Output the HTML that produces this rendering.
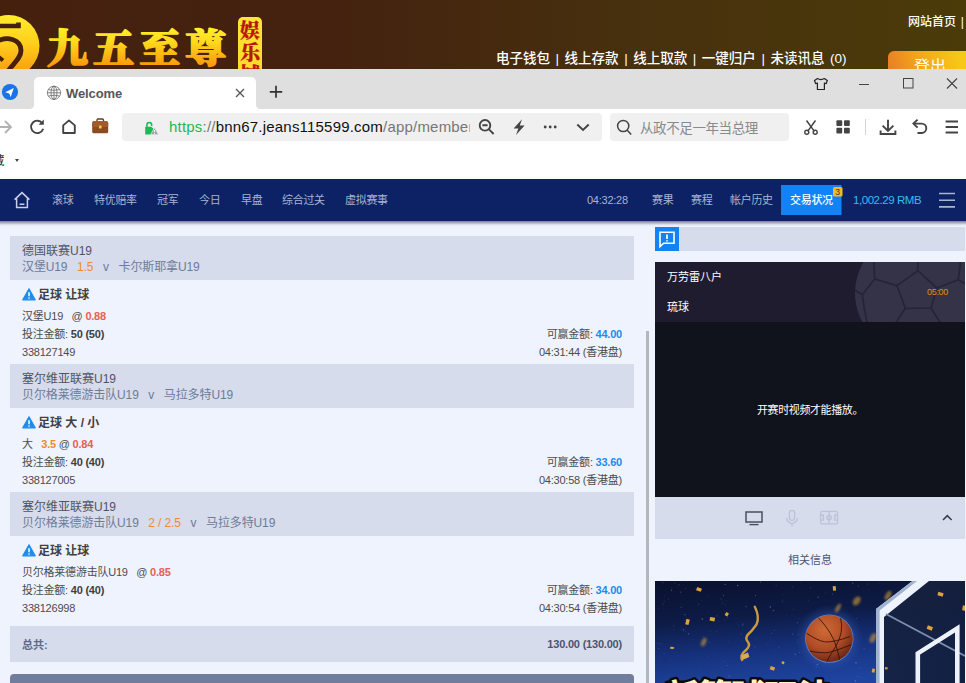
<!DOCTYPE html>
<html lang="zh-CN">
<head>
<meta charset="utf-8">
<title>Welcome</title>
<style>
*{box-sizing:border-box;margin:0;padding:0}
html,body{width:966px;height:683px;overflow:hidden;background:#eff3fe}
body{position:relative;font-family:"Liberation Sans","Noto Sans CJK SC",sans-serif;font-size:12px;color:#444}
.abs{position:absolute}
/* ---------- top site banner ---------- */
#banner{position:absolute;left:0;top:0;width:966px;height:69px;background:linear-gradient(90deg,#45200f 0%,#44220f 35%,#47300e 65%,#4b3b09 100%);overflow:hidden}
#logoc{position:absolute;left:-48px;top:23px;width:88px;height:88px;border-radius:50%;background:linear-gradient(180deg,#ffe93a 0%,#ffc21a 40%,#f39a0c 100%)}
#logot{position:absolute;left:46px;top:13px;font-family:"Liberation Serif","Noto Serif CJK SC",serif;font-weight:900;font-size:44px;line-height:60px;letter-spacing:2px;white-space:nowrap;background:linear-gradient(180deg,#fff02a 20%,#ffd21c 50%,#f59a0e 85%);-webkit-background-clip:text;background-clip:text;color:transparent}
#logob{position:absolute;left:238px;top:17px;width:24px;height:70px;border-radius:5px;background:linear-gradient(180deg,#ffe93a,#f5b21a);color:#b5140e;font-family:"Liberation Serif","Noto Serif CJK SC",serif;font-weight:900;font-size:20px;line-height:21px;text-align:center;padding-top:2px}
.blinks{position:absolute;color:#fff;font-weight:500;font-size:13px;line-height:16px;white-space:nowrap}
#logout{position:absolute;left:888px;top:51px;width:90px;height:30px;border-radius:6px 0 0 0;background:linear-gradient(75deg,#e87a26 0%,#f3a31c 35%,#f8c818 80%);color:#fff;font-size:16px;line-height:32px;text-align:left;padding-left:26px}
/* ---------- browser chrome ---------- */
#tabbar{position:absolute;left:0;top:69px;width:966px;height:40px;background:#dfdfdf}
#tab{position:absolute;left:34px;top:8px;width:222px;height:32px;background:#fff;border-radius:5px 5px 0 0}
#toolbar{position:absolute;left:0;top:109px;width:966px;height:37px;background:#fff}
#urlbox{position:absolute;left:122px;top:4px;width:479.5px;height:28px;border-radius:4px;background:#f0f0f0}
#searchbox{position:absolute;left:610px;top:4px;width:179px;height:28px;border-radius:4px;background:#f0f0f0}
#bmbar{position:absolute;left:0;top:146px;width:966px;height:33px;background:#fff}
/* ---------- nav ---------- */
#nav{position:absolute;left:0;top:179px;width:966px;height:42px;background:#0c2264}
#nav span{position:absolute;top:0;line-height:42px;font-size:11px;color:#a9b3d2;white-space:nowrap;letter-spacing:-.3px}
/* ---------- left list ---------- */
.hd{position:absolute;left:10px;width:624px;height:44px;background:#d6dcec}
.hd .l1{position:absolute;left:12px;top:8px;font-size:12px;line-height:14px;color:#505460;white-space:nowrap}
.hd .l2{position:absolute;left:12px;top:24px;font-size:12px;letter-spacing:-.12px;line-height:14px;color:#6d7b98;white-space:nowrap}
.hd .l2 b{font-weight:normal;color:#f08a32}
.bet{position:absolute;left:10px;width:624px;height:84px}
.bet div{position:absolute;white-space:nowrap;line-height:14px;font-size:11px;color:#4c4c4c;letter-spacing:-.22px}
.bet .t{left:28px;top:8px;font-size:12px;font-weight:bold;color:#404040;letter-spacing:0}
.bet .a{left:12px;top:29px}
.bet .b{left:12px;top:47px}
.bet .c{left:12px;top:65px}
.bet .d{right:12px;top:47px}
.bet .e{right:12px;top:65px}
.bet b{color:#404040}
.bet .r{color:#e8604e;font-weight:bold}
.bet .o{color:#ef8b1f;font-weight:bold}
.bet .bl{color:#1d8cf0;font-weight:bold}
.bet svg{position:absolute;left:12px;top:8px}
</style>
</head>
<body>
<!-- site banner -->
<div id="banner">
  <svg class="abs" style="left:0;top:0" width="280" height="69" viewBox="0 0 280 69">
    <defs>
      <linearGradient id="gy" x1="0" y1="0" x2="0" y2="1"><stop offset="0" stop-color="#ffee2c"/><stop offset=".45" stop-color="#ffcf1c"/><stop offset="1" stop-color="#f7960c"/></linearGradient>
      <linearGradient id="gt" gradientUnits="userSpaceOnUse" x1="0" y1="-35" x2="0" y2="4"><stop offset="0" stop-color="#fff22a"/><stop offset=".4" stop-color="#ffd81c"/><stop offset="1" stop-color="#f9980c"/></linearGradient>
      <linearGradient id="gb" x1="0" y1="0" x2="0" y2="1"><stop offset="0" stop-color="#ffe636"/><stop offset=".75" stop-color="#ffd92a"/><stop offset="1" stop-color="#f8c61e"/></linearGradient>
    </defs>
    <circle cx="8.5" cy="46" r="31" fill="url(#gy)"/>
    <path d="M-3,26 H18.5 V22.5" fill="none" stroke="#45200f" stroke-width="4.6"/>
    <path d="M-3,41.5 C6,36 21,38.5 21,50.5 C21,58 14,63 8,71" fill="none" stroke="#45200f" stroke-width="4.8"/>
    <path d="M-3,55.5 L3,60.5" fill="none" stroke="#45200f" stroke-width="4"/>
    <text transform="translate(47 61.9) scale(1.05 1)" x="0" y="0" font-family="'Liberation Serif','Noto Serif CJK SC',serif" font-weight="900" font-size="39" letter-spacing="4.9" fill="url(#gt)" stroke="url(#gt)" stroke-width="1.7" stroke-linejoin="round">九五至尊</text>
    <rect x="238" y="17" width="24" height="70" rx="5" fill="url(#gb)"/>
    <text font-family="'Liberation Serif','Noto Serif CJK SC',serif" font-weight="900" font-size="20" fill="#b8160e" stroke="#b8160e" stroke-width=".25" text-anchor="middle"><tspan x="250" y="37.6">娱</tspan><tspan x="250" y="59.6">乐</tspan><tspan x="250" y="81.6">城</tspan></text>
  </svg>
  <div class="blinks" style="left:908px;top:14px;font-size:12px;word-spacing:1.5px">网站首页 |</div>
  <div class="blinks" style="left:496px;top:51px;font-size:13.5px;word-spacing:1.8px">电子钱包 | 线上存款 | 线上取款 | 一键归户 | 未读讯息 (0)</div>
  <div id="logout">登出</div>
</div>
<!-- browser chrome -->
<div id="tabbar">
  <div class="abs" style="left:30px;top:36px;width:4px;height:4px;background:radial-gradient(circle at 0 0,#dfdfdf 3.6px,#fff 4.2px)"></div><div class="abs" style="left:256px;top:36px;width:4px;height:4px;background:radial-gradient(circle at 100% 0,#dfdfdf 3.6px,#fff 4.2px)"></div>
  <div id="tab"></div>
  <svg class="abs" style="left:0;top:0" width="966" height="39" viewBox="0 0 966 39">
    <!-- telegram-like icon -->
    <circle cx="10" cy="23" r="8.1" fill="#1a73e8"/>
    <path d="M5.2,23.3 L13.8,19.1 L10.7,28 L9.3,24.4 Z" fill="#fff"/>
    <!-- globe -->
    <g fill="none" stroke="#666" stroke-width=".8">
      <circle cx="54" cy="23.8" r="6.6"/>
      <ellipse cx="54" cy="23.8" rx="3" ry="6.6"/>
      <path d="M47.4,23.8 H60.6 M54,17.2 V30.4 M48.4,20.6 Q54,22.2 59.6,20.6 M48.4,27 Q54,25.4 59.6,27"/>
    </g>
    <!-- tab close -->
    <path d="M236,20 L244,28 M244,20 L236,28" stroke="#555" stroke-width="1.3" fill="none"/>
    <!-- plus -->
    <path d="M269.8,22.8 H282.2 M276,16.8 V28.8" stroke="#333" stroke-width="1.7" fill="none"/>
    <!-- shirt -->
    <path d="M817.5,9.5 L814.5,11.5 L815.6,14.6 L817.4,14 L817.4,20.5 L824.4,20.5 L824.4,14 L826.2,14.6 L827.3,11.5 L824.3,9.5 Q820.9,11.6 817.5,9.5 Z" fill="none" stroke="#222" stroke-width="1.2" stroke-linejoin="round"/>
    <!-- window controls -->
    <path d="M859,15.5 H869" stroke="#444" stroke-width="1"/>
    <rect x="903.5" y="9.5" width="9.5" height="9.5" fill="none" stroke="#444" stroke-width="1"/>
    <path d="M947,9.5 L957,19.5 M957,9.5 L947,19.5" stroke="#444" stroke-width="1.1"/>
  </svg>
  <div class="abs" style="left:66px;top:17px;font-size:13px;line-height:16px;font-weight:bold;color:#54565c;letter-spacing:-.1px">Welcome</div>
</div>
<div id="toolbar">
  <div id="urlbox"></div>
  <div id="searchbox"></div>
  <svg class="abs" style="left:0;top:-1px" width="966" height="38" viewBox="0 0 966 38">
    <!-- forward -->
    <path d="M-2,19 H10.8 M5,13 L11,19 L5,25" fill="none" stroke="#b2b2b2" stroke-width="1.8"/>
    <!-- reload -->
    <path d="M42.3,15.2 A6.2,6.2 0 1 0 43.2,20.8" fill="none" stroke="#444" stroke-width="1.9"/>
    <path d="M43.8,11.6 V16.8 H38.6 Z" fill="#444"/>
    <!-- home -->
    <path d="M63.2,17.4 L69,12.4 L74.8,17.4 V25 H63.2 Z" fill="none" stroke="#444" stroke-width="1.9" stroke-linejoin="round"/>
    <!-- briefcase -->
    <path d="M97,13.5 V12 Q97,11 98,11 H102.5 Q103.5,11 103.5,12 V13.5" fill="none" stroke="#6b3a1a" stroke-width="1.3"/>
    <rect x="92.2" y="13.3" width="16" height="12" rx="1.6" fill="#8a4a22"/>
    <rect x="92.2" y="13.3" width="16" height="5.6" rx="1.6" fill="#a35a2a"/>
    <rect x="99" y="17.6" width="2.6" height="3" rx=".6" fill="#f4c64a"/>
    <!-- lock -->
    <path d="M146.9,19 V17 A2.4,2.4 0 0 1 151.7,17 V18" fill="none" stroke="#1db954" stroke-width="1.5"/>
    <path d="M145.2,18.8 H151.2 L153.4,20.6 V26.6 H145.2 Z" fill="#1db954"/>
    <path d="M154.6,19.6 L158.6,26.7 H150.6 Z" fill="#a0a0a0" stroke="#f0f0f0" stroke-width=".7"/>
    <path d="M154.6,22 V24.3 M154.6,25 V25.9" stroke="#fff" stroke-width="1"/>
    <!-- zoom out -->
    <circle cx="485" cy="17.3" r="5.3" fill="none" stroke="#444" stroke-width="1.9"/>
    <path d="M488.8,21.2 L493.6,26 M482.4,17.3 H487.6" stroke="#444" stroke-width="1.9" fill="none"/>
    <!-- bolt -->
    <path d="M522,11.2 L513.6,20.6 H518.4 L516,27 L524.6,17.4 H519.8 Z" fill="#444"/>
    <!-- dots -->
    <circle cx="545.2" cy="19" r="1.45" fill="#444"/><circle cx="550.2" cy="19" r="1.45" fill="#444"/><circle cx="555.2" cy="19" r="1.45" fill="#444"/>
    <!-- chevron -->
    <path d="M577.3,16.5 L583,22 L588.7,16.5" fill="none" stroke="#444" stroke-width="1.9"/>
    <!-- search -->
    <circle cx="623.2" cy="18" r="5.6" fill="none" stroke="#444" stroke-width="1.5"/>
    <path d="M627.2,22.2 L631.2,26.4" stroke="#444" stroke-width="1.5"/>
    <!-- scissors -->
    <path d="M806.5,12.5 L814.4,23.4 M815.5,12.5 L807.6,23.4" stroke="#444" stroke-width="1.5" fill="none"/>
    <circle cx="806.8" cy="24.2" r="2" fill="none" stroke="#444" stroke-width="1.4"/>
    <circle cx="815.2" cy="24.2" r="2" fill="none" stroke="#444" stroke-width="1.4"/>
    <!-- grid -->
    <rect x="836.4" y="12.2" width="5.8" height="5.8" rx="1" fill="#444"/><rect x="844" y="12.2" width="5.8" height="5.8" rx="1" fill="#444"/>
    <rect x="836.4" y="19.8" width="5.8" height="5.8" rx="1" fill="#444"/><rect x="844" y="19.8" width="5.8" height="5.8" rx="1" fill="#444"/>
    <path d="M865.5,11 V27" stroke="#d4d4d4" stroke-width="1"/>
    <!-- download -->
    <path d="M888,11.8 V22.6 M882.6,17.6 L888,23 L893.4,17.6 M880.6,22.5 V26 H895.4 V22.5" fill="none" stroke="#444" stroke-width="1.9"/>
    <!-- undo -->
    <path d="M914.5,15.6 H921.6 A4.7,4.7 0 0 1 921.6,25 H917.5" fill="none" stroke="#444" stroke-width="1.9"/>
    <path d="M917.6,11.6 L913.4,15.6 L917.6,19.6" fill="none" stroke="#444" stroke-width="1.9"/>
    <!-- menu -->
    <path d="M945.6,13.5 H958 M945.6,19 H958 M945.6,24.5 H958" stroke="#444" stroke-width="1.8"/>
  </svg>
  <div class="abs" style="left:169px;top:8px;font-size:15px;line-height:20px;white-space:nowrap;width:301px;overflow:hidden;color:#111;letter-spacing:.2px"><span style="color:#1db954">https</span><span style="color:#777">://</span>bnn67.jeans115599.com<span style="color:#777">/app/member/</span></div>
  <div class="abs" style="left:640px;top:10px;font-size:13.5px;line-height:20px;white-space:nowrap;color:#8a8a8a;letter-spacing:-.4px">从政不足一年当总理</div>
</div>
<div id="bmbar">
  <div class="abs" style="left:-8px;top:7px;font-size:12.5px;line-height:16px;color:#333">藏</div>
  <div class="abs" style="left:15.3px;top:11px;width:0;height:0;border:2.5px solid transparent;border-top:3px solid #444;margin-top:2px"></div>
</div>
<!-- nav -->
<div class="abs" style="left:-20px;top:179px;width:1006px;height:42px;background:#0c2264;box-shadow:0 2px 3px rgba(0,0,0,.5)"></div>
<div id="nav">
  <svg class="abs" style="left:0;top:0" width="966" height="42" viewBox="0 0 966 42">
    <path d="M14.6,20.6 L22,13.6 L29.4,20.6 M16.6,19.4 V28.4 H27.4 V19.4 M19.6,25.2 H24.4" fill="none" stroke="#c9d0e6" stroke-width="1.5"/>
    <rect x="781" y="6" width="60.5" height="30" fill="#1183f4"/>
    <rect x="833" y="8" width="9.5" height="9.5" rx="1.5" fill="#f6b91f"/>
    <path d="M939,14.5 H955 M939,21.2 H955 M939,27.9 H955" stroke="#a9b3d2" stroke-width="1.6"/>
  </svg>
  <span style="left:52px">滚球</span>
  <span style="left:94px">特优赔率</span>
  <span style="left:157px">冠军</span>
  <span style="left:199px">今日</span>
  <span style="left:241px">早盘</span>
  <span style="left:282px">综合过关</span>
  <span style="left:345px">虚拟赛事</span>
  <span style="left:587px;letter-spacing:-.25px">04:32:28</span>
  <span style="left:652px">赛果</span>
  <span style="left:691px">赛程</span>
  <span style="left:730px">帐户历史</span>
  <span style="left:790px;color:#fff;font-weight:500">交易状况</span>
  <span style="left:835.3px;top:7.5px;line-height:10px;font-size:8.5px;color:#333;letter-spacing:0">3</span>
  <span style="left:853px;color:#35bdf0;letter-spacing:-.45px;font-size:11.5px">1,002.29 RMB</span>
</div>
<!-- left list -->
<div id="left">
<div class="hd" style="top:236px"><div class="l1">德国联赛U19</div><div class="l2">汉堡U19&nbsp;&nbsp; <b>1.5</b>&nbsp;&nbsp; v&nbsp;&nbsp; 卡尔斯耶拿U19</div></div>
<div class="bet" style="top:280px"><svg width="14" height="13" viewBox="0 0 14 13"><path d="M7,0.8 L13.2,11.8 H0.8 Z" fill="#1d8cf0" stroke="#1d8cf0" stroke-width="1.2" stroke-linejoin="round"/><path d="M7,4.2 V8.2 M7,9.4 V10.8" stroke="#fff" stroke-width="1.5"/></svg><div class="t">足球 让球</div><div class="a">汉堡U19&nbsp;&nbsp; @ <span class="r">0.88</span></div><div class="b">投注金额: <b>50 (50)</b></div><div class="c">338127149</div><div class="d">可赢金额: <span class="bl">44.00</span></div><div class="e">04:31:44 (香港盘)</div></div>
<div class="hd" style="top:364px"><div class="l1">塞尔维亚联赛U19</div><div class="l2">贝尔格莱德游击队U19&nbsp;&nbsp; v&nbsp;&nbsp; 马拉多特U19</div></div>
<div class="bet" style="top:408px"><svg width="14" height="13" viewBox="0 0 14 13"><path d="M7,0.8 L13.2,11.8 H0.8 Z" fill="#1d8cf0" stroke="#1d8cf0" stroke-width="1.2" stroke-linejoin="round"/><path d="M7,4.2 V8.2 M7,9.4 V10.8" stroke="#fff" stroke-width="1.5"/></svg><div class="t">足球 大 / 小</div><div class="a">大&nbsp;&nbsp; <span class="o">3.5</span> @ <span class="r">0.84</span></div><div class="b">投注金额: <b>40 (40)</b></div><div class="c">338127005</div><div class="d">可赢金额: <span class="bl">33.60</span></div><div class="e">04:30:58 (香港盘)</div></div>
<div class="hd" style="top:492px"><div class="l1">塞尔维亚联赛U19</div><div class="l2">贝尔格莱德游击队U19&nbsp;&nbsp; <b>2 / 2.5</b>&nbsp;&nbsp; v&nbsp;&nbsp; 马拉多特U19</div></div>
<div class="bet" style="top:536px"><svg width="14" height="13" viewBox="0 0 14 13"><path d="M7,0.8 L13.2,11.8 H0.8 Z" fill="#1d8cf0" stroke="#1d8cf0" stroke-width="1.2" stroke-linejoin="round"/><path d="M7,4.2 V8.2 M7,9.4 V10.8" stroke="#fff" stroke-width="1.5"/></svg><div class="t">足球 让球</div><div class="a">贝尔格莱德游击队U19&nbsp;&nbsp; @ <span class="r">0.85</span></div><div class="b">投注金额: <b>40 (40)</b></div><div class="c">338126998</div><div class="d">可赢金额: <span class="bl">34.00</span></div><div class="e">04:30:54 (香港盘)</div></div>
<div class="hd" style="top:626px;height:36px"><div class="l1" style="top:12px;font-size:11px;font-weight:bold;color:#5d6b8a">总共:</div><div class="l1" style="left:auto;right:12px;top:11px;font-size:11px;font-weight:bold;color:#4b556f;letter-spacing:-.2px">130.00 (130.00)</div></div>
<div class="abs" style="left:10px;top:674px;width:624px;height:20px;border-radius:4px 4px 0 0;background:#717d9d"></div>
<div class="abs" style="left:646px;top:331px;width:3px;height:360px;background:#b4b6bd"></div>
</div>
<!-- right -->
<div id="right">
  <div class="abs" style="left:655px;top:227px;width:310px;height:24px;background:#d6dcec"></div>
  <div class="abs" style="left:655px;top:227px;width:24px;height:24px;background:#1183f4"></div>
  <svg class="abs" style="left:655px;top:227px" width="24" height="24" viewBox="0 0 24 24"><path d="M5,5.2 H19 V16.2 H8.6 L5,19.6 Z" fill="none" stroke="#fff" stroke-width="1.6" stroke-linejoin="miter"/><path d="M12,7.6 V12 M12,13.2 V14.6" stroke="#fff" stroke-width="1.7"/></svg>
  <!-- video -->
  <div class="abs" style="left:655px;top:262px;width:310px;height:235px;background:#10131c"></div>
  <div class="abs" style="left:655px;top:262px;width:310px;height:60px;background:#1e1c2e;overflow:hidden">
    <svg class="abs" style="left:0;top:0" width="310" height="60" viewBox="0 0 310 60">
      <circle cx="260" cy="31" r="60" fill="#353348"/>
      <g fill="none" stroke="#262438" stroke-width="1.7" stroke-linejoin="round">
        <path d="M242,23.6 L262.8,8.7 L281.8,26 L276,46 L250.3,46.3 Z"/>
        <path d="M242,23.6 L219.7,17 L218.6,-4 M219.7,17 L207.3,32.7 Q209,48 212.5,62 M207.3,32.7 L200,28"/>
        <path d="M262.8,8.7 L262.8,-4 M281.8,26 L303.3,17.8 L306,-4 M303.3,17.8 L312,23"/>
        <path d="M276,46 L286,62 M250.3,46.3 L240,62"/>
      </g>
    </svg>
    <div class="abs" style="left:12px;top:7px;font-size:11px;line-height:16px;color:#fff;white-space:nowrap">万劳雷八户</div>
    <div class="abs" style="left:12px;top:37px;font-size:11px;line-height:16px;color:#fff;white-space:nowrap">琉球</div>
    <div class="abs" style="left:272px;top:24px;font-size:9px;line-height:12px;color:#e8890c;white-space:nowrap;letter-spacing:-.3px">05:00</div>
  </div>
  <div class="abs" style="left:655px;top:402px;width:310px;text-align:center;font-size:11px;line-height:16px;color:#fff;letter-spacing:-.4px">开赛时视频才能播放。</div>
  <!-- controls -->
  <div class="abs" style="left:655px;top:497px;width:310px;height:42px;background:#d6dcec"></div>
  <svg class="abs" style="left:655px;top:497px" width="310" height="42" viewBox="0 0 310 42">
    <rect x="91" y="15" width="16" height="10" fill="none" stroke="#4a4f5e" stroke-width="1.5"/>
    <path d="M94.5,27.6 H103.5" stroke="#4a4f5e" stroke-width="1.4"/>
    <g fill="none" stroke="#bcc3d6" stroke-width="1.3">
      <rect x="134.4" y="13.4" width="5.2" height="10" rx="2.6"/>
      <path d="M131.6,21 A5.4,5.4 0 0 0 142.4,21 M137,26.6 V29.4"/>
      <rect x="165.6" y="14.4" width="17" height="12.4" rx="1.6"/>
      <path d="M174.1,14.4 V26.8 M165.6,18 H168.4 V23.2 H165.6 M182.6,18 H179.8 V23.2 H182.6"/>
      <circle cx="174.1" cy="20.6" r="2.2"/>
    </g>
    <path d="M288,23 L292.3,18.7 L296.6,23" fill="none" stroke="#3a3f4e" stroke-width="1.6"/>
  </svg>
  <div class="abs" style="left:655px;top:552px;width:310px;text-align:center;font-size:11px;line-height:16px;color:#4d5570">相关信息</div>
  <!-- banner -->
  <div id="promo" class="abs" style="left:655px;top:581px;width:310px;height:102px;overflow:hidden;background:#0d1c44"><svg class="abs" style="left:0;top:0" width="310" height="102" viewBox="0 0 310 102">
<defs>
<linearGradient id="pg1" x1="0.2" y1="0" x2="0.45" y2="1"><stop offset="0" stop-color="#0a1230"/><stop offset=".35" stop-color="#0d1b46"/><stop offset=".68" stop-color="#16327e"/><stop offset="1" stop-color="#1e44a0"/></linearGradient>
<radialGradient id="pg2" cx="0.5" cy="0.5" r="0.5"><stop offset="0" stop-color="#5a8cf0" stop-opacity=".8"/><stop offset=".62" stop-color="#3a66c8" stop-opacity=".45"/><stop offset="1" stop-color="#2a50a8" stop-opacity="0"/></radialGradient>
<radialGradient id="pg3" cx="0.4" cy="0.32" r="0.75"><stop offset="0" stop-color="#cf6a36"/><stop offset=".55" stop-color="#b04c26"/><stop offset="1" stop-color="#5e2010"/></radialGradient>
<filter id="pbl" x="-50%" y="-50%" width="200%" height="200%"><feGaussianBlur stdDeviation=".9"/></filter><linearGradient id="pg4" x1="0" y1="0" x2="1" y2="1"><stop offset="0" stop-color="#17233f"/><stop offset="1" stop-color="#111c3a"/></linearGradient>
</defs>
<rect width="310" height="102" fill="url(#pg1)"/>
<circle cx="101.8" cy="57.1" r="0.5" fill="#a9c6ff" opacity="0.21"/><circle cx="114.3" cy="59.9" r="0.4" fill="#a9c6ff" opacity="0.28"/><circle cx="107.0" cy="62.6" r="0.4" fill="#a9c6ff" opacity="0.10"/><circle cx="100.5" cy="14.5" r="0.6" fill="#a9c6ff" opacity="0.39"/><circle cx="142.8" cy="60.7" r="0.5" fill="#a9c6ff" opacity="0.21"/><circle cx="147.1" cy="62.8" r="0.4" fill="#a9c6ff" opacity="0.28"/><circle cx="3.4" cy="53.9" r="0.35" fill="#a9c6ff" opacity="0.10"/><circle cx="42.8" cy="24.7" r="0.35" fill="#a9c6ff" opacity="0.21"/><circle cx="73.4" cy="60.3" r="0.4" fill="#a9c6ff" opacity="0.28"/><circle cx="52.6" cy="30.0" r="0.35" fill="#a9c6ff" opacity="0.39"/><circle cx="19.1" cy="66.8" r="0.5" fill="#a9c6ff" opacity="0.28"/><circle cx="224.0" cy="85.7" r="0.8" fill="#a9c6ff" opacity="0.17"/><circle cx="70.9" cy="23.4" r="0.5" fill="#a9c6ff" opacity="0.10"/><circle cx="15.8" cy="78.2" r="0.5" fill="#a9c6ff" opacity="0.10"/><circle cx="190.5" cy="39.4" r="0.35" fill="#a9c6ff" opacity="0.39"/><circle cx="0.1" cy="21.4" r="0.35" fill="#a9c6ff" opacity="0.21"/><circle cx="84.5" cy="72.3" r="0.5" fill="#a9c6ff" opacity="0.10"/><circle cx="127.4" cy="20.2" r="0.8" fill="#a9c6ff" opacity="0.17"/><circle cx="75.8" cy="31.7" r="0.35" fill="#a9c6ff" opacity="0.21"/><circle cx="170.6" cy="12.0" r="0.4" fill="#a9c6ff" opacity="0.39"/><circle cx="22.7" cy="6.1" r="0.5" fill="#a9c6ff" opacity="0.14"/><circle cx="153.5" cy="19.2" r="0.6" fill="#a9c6ff" opacity="0.14"/><circle cx="221.7" cy="78.5" r="0.5" fill="#a9c6ff" opacity="0.39"/><circle cx="86.3" cy="40.3" r="0.4" fill="#a9c6ff" opacity="0.10"/><circle cx="60.7" cy="99.0" r="0.6" fill="#a9c6ff" opacity="0.17"/><circle cx="224.5" cy="2.0" r="0.4" fill="#a9c6ff" opacity="0.21"/><circle cx="224.1" cy="61.4" r="0.6" fill="#a9c6ff" opacity="0.10"/><circle cx="9.5" cy="14.9" r="0.5" fill="#a9c6ff" opacity="0.17"/><circle cx="2.2" cy="62.3" r="0.5" fill="#a9c6ff" opacity="0.21"/><circle cx="16.5" cy="9.2" r="0.6" fill="#a9c6ff" opacity="0.39"/><circle cx="54.7" cy="61.3" r="0.5" fill="#a9c6ff" opacity="0.28"/><circle cx="102.0" cy="97.8" r="0.5" fill="#a9c6ff" opacity="0.28"/><circle cx="30.5" cy="39.4" r="0.8" fill="#a9c6ff" opacity="0.14"/><circle cx="69.9" cy="23.3" r="0.6" fill="#a9c6ff" opacity="0.14"/><circle cx="163.2" cy="16.2" r="0.8" fill="#a9c6ff" opacity="0.28"/><circle cx="44.2" cy="96.9" r="0.5" fill="#a9c6ff" opacity="0.28"/><circle cx="17.7" cy="4.8" r="0.35" fill="#a9c6ff" opacity="0.10"/><circle cx="115.3" cy="26.0" r="0.8" fill="#a9c6ff" opacity="0.39"/><circle cx="88.1" cy="42.9" r="0.6" fill="#a9c6ff" opacity="0.21"/><circle cx="66.0" cy="17.9" r="0.8" fill="#a9c6ff" opacity="0.10"/><circle cx="28.4" cy="48.9" r="0.8" fill="#a9c6ff" opacity="0.28"/><circle cx="138.2" cy="28.6" r="0.4" fill="#a9c6ff" opacity="0.39"/><circle cx="3.7" cy="27.5" r="0.5" fill="#a9c6ff" opacity="0.14"/><circle cx="13.6" cy="18.0" r="0.5" fill="#a9c6ff" opacity="0.28"/><circle cx="128.7" cy="13.4" r="0.5" fill="#a9c6ff" opacity="0.14"/><circle cx="200.5" cy="100.0" r="0.8" fill="#a9c6ff" opacity="0.39"/><circle cx="155.5" cy="59.6" r="0.4" fill="#a9c6ff" opacity="0.28"/><circle cx="7.9" cy="1.8" r="0.5" fill="#a9c6ff" opacity="0.39"/><circle cx="70.2" cy="3.4" r="0.6" fill="#a9c6ff" opacity="0.39"/><circle cx="16.8" cy="6.9" r="0.5" fill="#a9c6ff" opacity="0.17"/><circle cx="30.7" cy="7.4" r="0.5" fill="#a9c6ff" opacity="0.28"/><circle cx="82.7" cy="4.5" r="0.8" fill="#a9c6ff" opacity="0.39"/><circle cx="158.3" cy="80.9" r="0.5" fill="#a9c6ff" opacity="0.17"/><circle cx="19.1" cy="48.3" r="0.35" fill="#a9c6ff" opacity="0.21"/><circle cx="212.5" cy="3.1" r="0.5" fill="#a9c6ff" opacity="0.28"/><circle cx="3.3" cy="67.6" r="0.5" fill="#a9c6ff" opacity="0.28"/><circle cx="2.8" cy="7.4" r="0.35" fill="#a9c6ff" opacity="0.39"/><circle cx="26.0" cy="26.2" r="0.5" fill="#a9c6ff" opacity="0.39"/><circle cx="74.3" cy="95.3" r="0.8" fill="#a9c6ff" opacity="0.28"/><circle cx="103.0" cy="47.2" r="0.6" fill="#a9c6ff" opacity="0.10"/><circle cx="116.7" cy="52.5" r="0.5" fill="#a9c6ff" opacity="0.28"/><circle cx="19.7" cy="2.3" r="0.8" fill="#a9c6ff" opacity="0.10"/><circle cx="111.9" cy="62.7" r="0.5" fill="#a9c6ff" opacity="0.17"/><circle cx="201.7" cy="37.5" r="0.4" fill="#a9c6ff" opacity="0.39"/><circle cx="137.6" cy="52.9" r="0.5" fill="#a9c6ff" opacity="0.39"/><circle cx="209.3" cy="50.8" r="0.4" fill="#a9c6ff" opacity="0.17"/><circle cx="91.1" cy="25.6" r="0.8" fill="#a9c6ff" opacity="0.21"/><circle cx="180.8" cy="77.0" r="0.4" fill="#a9c6ff" opacity="0.14"/><circle cx="86.5" cy="59.5" r="0.5" fill="#a9c6ff" opacity="0.14"/><circle cx="30.6" cy="50.6" r="0.35" fill="#a9c6ff" opacity="0.39"/><circle cx="14.4" cy="100.0" r="0.4" fill="#a9c6ff" opacity="0.10"/><circle cx="101.4" cy="28.1" r="0.4" fill="#a9c6ff" opacity="0.21"/><circle cx="86.1" cy="53.0" r="0.8" fill="#a9c6ff" opacity="0.17"/><circle cx="161.2" cy="85.9" r="0.6" fill="#a9c6ff" opacity="0.21"/><circle cx="72.1" cy="84.5" r="0.5" fill="#a9c6ff" opacity="0.28"/><circle cx="9.3" cy="72.3" r="0.6" fill="#a9c6ff" opacity="0.17"/><circle cx="69.5" cy="80.7" r="0.35" fill="#a9c6ff" opacity="0.39"/><circle cx="30.6" cy="46.4" r="0.35" fill="#a9c6ff" opacity="0.17"/><circle cx="53.4" cy="14.4" r="0.35" fill="#a9c6ff" opacity="0.39"/><circle cx="25.9" cy="11.1" r="0.6" fill="#a9c6ff" opacity="0.39"/><circle cx="144.0" cy="37.6" r="0.35" fill="#a9c6ff" opacity="0.39"/><circle cx="44.6" cy="84.0" r="0.5" fill="#a9c6ff" opacity="0.14"/><circle cx="160.7" cy="77.0" r="0.6" fill="#a9c6ff" opacity="0.39"/><circle cx="8.1" cy="23.1" r="0.5" fill="#a9c6ff" opacity="0.28"/><circle cx="156.9" cy="53.1" r="0.6" fill="#a9c6ff" opacity="0.14"/><circle cx="88.5" cy="80.8" r="0.4" fill="#a9c6ff" opacity="0.10"/><circle cx="92.4" cy="91.1" r="0.5" fill="#a9c6ff" opacity="0.14"/><circle cx="101.4" cy="20.1" r="0.35" fill="#a9c6ff" opacity="0.21"/><circle cx="123.8" cy="66.6" r="0.6" fill="#a9c6ff" opacity="0.17"/><circle cx="104.3" cy="66.4" r="0.4" fill="#a9c6ff" opacity="0.10"/><circle cx="162.4" cy="83.5" r="0.8" fill="#a9c6ff" opacity="0.39"/><circle cx="27.8" cy="24.7" r="0.5" fill="#a9c6ff" opacity="0.10"/><circle cx="219.9" cy="54.8" r="0.5" fill="#a9c6ff" opacity="0.17"/><circle cx="204.7" cy="87.3" r="0.5" fill="#a9c6ff" opacity="0.28"/><circle cx="18.6" cy="45.0" r="0.6" fill="#a9c6ff" opacity="0.21"/><circle cx="172.9" cy="49.7" r="0.35" fill="#a9c6ff" opacity="0.14"/><circle cx="182.1" cy="6.5" r="0.35" fill="#a9c6ff" opacity="0.14"/><circle cx="120.0" cy="70.0" r="0.4" fill="#a9c6ff" opacity="0.21"/><circle cx="33.5" cy="52.7" r="0.8" fill="#a9c6ff" opacity="0.28"/><circle cx="189.0" cy="70.3" r="0.5" fill="#a9c6ff" opacity="0.28"/><circle cx="213.6" cy="8.8" r="0.4" fill="#a9c6ff" opacity="0.21"/><circle cx="118.5" cy="29.6" r="0.8" fill="#a9c6ff" opacity="0.28"/><circle cx="143.7" cy="53.3" r="0.6" fill="#a9c6ff" opacity="0.17"/><circle cx="70.1" cy="38.9" r="0.6" fill="#a9c6ff" opacity="0.14"/><circle cx="68.5" cy="14.4" r="0.6" fill="#a9c6ff" opacity="0.28"/><circle cx="61.4" cy="50.8" r="0.5" fill="#a9c6ff" opacity="0.28"/><circle cx="25.7" cy="0.5" r="0.5" fill="#a9c6ff" opacity="0.10"/><circle cx="121.1" cy="4.5" r="0.5" fill="#a9c6ff" opacity="0.28"/><circle cx="180.2" cy="57.4" r="0.5" fill="#a9c6ff" opacity="0.10"/><circle cx="155.5" cy="6.7" r="0.6" fill="#a9c6ff" opacity="0.21"/><circle cx="93.1" cy="97.6" r="0.5" fill="#a9c6ff" opacity="0.17"/><circle cx="55.4" cy="50.3" r="0.5" fill="#a9c6ff" opacity="0.21"/><circle cx="202.7" cy="95.4" r="0.5" fill="#a9c6ff" opacity="0.28"/><circle cx="71.4" cy="19.5" r="0.6" fill="#a9c6ff" opacity="0.10"/><circle cx="208.2" cy="13.2" r="0.35" fill="#a9c6ff" opacity="0.10"/><circle cx="43.7" cy="23.2" r="0.8" fill="#a9c6ff" opacity="0.17"/><circle cx="72.5" cy="36.2" r="0.6" fill="#a9c6ff" opacity="0.21"/><circle cx="23.6" cy="74.6" r="0.35" fill="#a9c6ff" opacity="0.28"/><circle cx="140.3" cy="73.2" r="0.8" fill="#a9c6ff" opacity="0.28"/><circle cx="197.7" cy="2.4" r="0.8" fill="#a9c6ff" opacity="0.21"/><circle cx="185.7" cy="62.8" r="0.6" fill="#a9c6ff" opacity="0.14"/><circle cx="194.4" cy="54.5" r="0.4" fill="#a9c6ff" opacity="0.28"/><circle cx="48.6" cy="55.4" r="0.6" fill="#a9c6ff" opacity="0.14"/><circle cx="52.3" cy="75.6" r="0.5" fill="#a9c6ff" opacity="0.14"/><circle cx="71.1" cy="32.1" r="0.4" fill="#a9c6ff" opacity="0.14"/><circle cx="175.1" cy="19.8" r="0.35" fill="#a9c6ff" opacity="0.14"/><circle cx="200.0" cy="13.5" r="0.35" fill="#a9c6ff" opacity="0.17"/><circle cx="87.3" cy="44.3" r="0.5" fill="#a9c6ff" opacity="0.28"/><circle cx="177.7" cy="12.9" r="0.5" fill="#a9c6ff" opacity="0.39"/><circle cx="154.2" cy="1.8" r="0.4" fill="#a9c6ff" opacity="0.28"/><circle cx="153.5" cy="93.0" r="0.5" fill="#a9c6ff" opacity="0.10"/><circle cx="158.6" cy="64.7" r="0.5" fill="#a9c6ff" opacity="0.28"/><circle cx="224.7" cy="85.0" r="0.35" fill="#a9c6ff" opacity="0.21"/><circle cx="23.9" cy="3.8" r="0.6" fill="#a9c6ff" opacity="0.28"/><circle cx="115.8" cy="58.0" r="0.4" fill="#a9c6ff" opacity="0.14"/><circle cx="41.5" cy="20.8" r="0.4" fill="#a9c6ff" opacity="0.17"/><circle cx="208.6" cy="9.7" r="0.35" fill="#a9c6ff" opacity="0.14"/><circle cx="214.1" cy="47.1" r="0.35" fill="#a9c6ff" opacity="0.17"/><circle cx="87.9" cy="43.5" r="0.5" fill="#a9c6ff" opacity="0.21"/><circle cx="47.3" cy="38.1" r="0.8" fill="#a9c6ff" opacity="0.39"/><circle cx="9.2" cy="20.4" r="0.5" fill="#a9c6ff" opacity="0.21"/><circle cx="80.9" cy="37.8" r="0.4" fill="#a9c6ff" opacity="0.28"/><circle cx="37.1" cy="52.3" r="0.35" fill="#a9c6ff" opacity="0.17"/><circle cx="201.0" cy="81.8" r="0.8" fill="#a9c6ff" opacity="0.39"/><circle cx="211.4" cy="58.1" r="0.4" fill="#a9c6ff" opacity="0.28"/><circle cx="131.5" cy="34.8" r="0.5" fill="#a9c6ff" opacity="0.17"/><circle cx="205.0" cy="75.9" r="0.4" fill="#a9c6ff" opacity="0.21"/><circle cx="30.0" cy="33.7" r="0.6" fill="#a9c6ff" opacity="0.39"/><circle cx="83.2" cy="44.0" r="0.4" fill="#a9c6ff" opacity="0.21"/><circle cx="46.5" cy="18.9" r="0.5" fill="#a9c6ff" opacity="0.17"/><circle cx="105.5" cy="1.1" r="0.5" fill="#a9c6ff" opacity="0.39"/><circle cx="203.1" cy="5.1" r="0.5" fill="#a9c6ff" opacity="0.39"/><circle cx="67.2" cy="22.0" r="0.5" fill="#a9c6ff" opacity="0.28"/><circle cx="40.9" cy="7.8" r="0.6" fill="#a9c6ff" opacity="0.21"/><circle cx="144.5" cy="71.5" r="0.5" fill="#a9c6ff" opacity="0.28"/><circle cx="5.1" cy="62.8" r="0.8" fill="#a9c6ff" opacity="0.14"/><circle cx="57.7" cy="41.0" r="0.35" fill="#a9c6ff" opacity="0.14"/><circle cx="145.8" cy="1.1" r="0.5" fill="#a9c6ff" opacity="0.17"/><circle cx="62.0" cy="34.8" r="0.6" fill="#a9c6ff" opacity="0.28"/><circle cx="93.5" cy="53.1" r="0.35" fill="#a9c6ff" opacity="0.39"/><circle cx="100.0" cy="65.8" r="0.6" fill="#a9c6ff" opacity="0.28"/><circle cx="150.4" cy="97.4" r="0.5" fill="#a9c6ff" opacity="0.14"/><circle cx="86.8" cy="98.9" r="0.5" fill="#a9c6ff" opacity="0.28"/><circle cx="137.5" cy="6.0" r="0.5" fill="#a9c6ff" opacity="0.21"/><circle cx="64.0" cy="40.7" r="0.5" fill="#a9c6ff" opacity="0.17"/><circle cx="119.3" cy="49.3" r="0.5" fill="#a9c6ff" opacity="0.28"/><circle cx="209.1" cy="67.7" r="0.8" fill="#a9c6ff" opacity="0.17"/><circle cx="6.0" cy="78.8" r="0.6" fill="#a9c6ff" opacity="0.10"/><circle cx="142.4" cy="41.7" r="0.8" fill="#a9c6ff" opacity="0.21"/><circle cx="11.9" cy="32.1" r="0.5" fill="#a9c6ff" opacity="0.10"/><circle cx="274.4" cy="73.8" r=".4" fill="#a9c6ff" opacity="0.10"/><circle cx="252.1" cy="81.4" r=".4" fill="#a9c6ff" opacity="0.10"/><circle cx="244.0" cy="73.4" r=".4" fill="#a9c6ff" opacity="0.10"/><circle cx="246.3" cy="77.1" r=".4" fill="#a9c6ff" opacity="0.10"/><circle cx="228.9" cy="10.0" r=".4" fill="#a9c6ff" opacity="0.10"/><circle cx="293.9" cy="92.8" r=".4" fill="#a9c6ff" opacity="0.10"/><circle cx="237.3" cy="97.9" r=".4" fill="#a9c6ff" opacity="0.10"/><circle cx="245.8" cy="72.1" r=".4" fill="#a9c6ff" opacity="0.10"/><circle cx="229.3" cy="42.6" r=".4" fill="#a9c6ff" opacity="0.10"/><circle cx="235.0" cy="87.8" r=".4" fill="#a9c6ff" opacity="0.10"/><circle cx="255.3" cy="15.8" r=".4" fill="#a9c6ff" opacity="0.10"/><circle cx="255.9" cy="14.3" r=".4" fill="#a9c6ff" opacity="0.10"/><circle cx="260.4" cy="61.3" r=".4" fill="#a9c6ff" opacity="0.10"/><circle cx="279.4" cy="69.6" r=".4" fill="#a9c6ff" opacity="0.10"/><circle cx="255.9" cy="75.9" r=".4" fill="#a9c6ff" opacity="0.10"/><circle cx="294.3" cy="14.0" r=".4" fill="#a9c6ff" opacity="0.10"/><circle cx="249.7" cy="13.1" r=".4" fill="#a9c6ff" opacity="0.10"/><circle cx="265.9" cy="51.3" r=".4" fill="#a9c6ff" opacity="0.10"/><circle cx="251.2" cy="51.7" r=".4" fill="#a9c6ff" opacity="0.10"/><circle cx="297.0" cy="28.0" r=".4" fill="#a9c6ff" opacity="0.10"/><circle cx="276.8" cy="74.0" r=".4" fill="#a9c6ff" opacity="0.10"/><circle cx="284.4" cy="19.4" r=".4" fill="#a9c6ff" opacity="0.10"/><circle cx="248.7" cy="24.4" r=".4" fill="#a9c6ff" opacity="0.10"/><circle cx="305.9" cy="51.2" r=".4" fill="#a9c6ff" opacity="0.10"/><circle cx="280.5" cy="20.0" r=".4" fill="#a9c6ff" opacity="0.10"/><circle cx="283.1" cy="64.1" r=".4" fill="#a9c6ff" opacity="0.10"/><circle cx="225.8" cy="26.5" r=".4" fill="#a9c6ff" opacity="0.10"/><circle cx="227.3" cy="3.9" r=".4" fill="#a9c6ff" opacity="0.10"/><circle cx="243.9" cy="28.4" r=".4" fill="#a9c6ff" opacity="0.10"/><circle cx="289.2" cy="93.1" r=".4" fill="#a9c6ff" opacity="0.10"/><circle cx="238.7" cy="23.9" r=".4" fill="#a9c6ff" opacity="0.10"/><circle cx="308.4" cy="49.4" r=".4" fill="#a9c6ff" opacity="0.10"/><circle cx="255.1" cy="34.5" r=".4" fill="#a9c6ff" opacity="0.10"/><circle cx="267.0" cy="13.6" r=".4" fill="#a9c6ff" opacity="0.10"/><circle cx="298.9" cy="81.8" r=".4" fill="#a9c6ff" opacity="0.10"/><circle cx="263.0" cy="83.8" r=".4" fill="#a9c6ff" opacity="0.10"/><circle cx="296.2" cy="78.4" r=".4" fill="#a9c6ff" opacity="0.10"/><circle cx="262.8" cy="76.2" r=".4" fill="#a9c6ff" opacity="0.10"/><circle cx="258.2" cy="15.4" r=".4" fill="#a9c6ff" opacity="0.10"/><circle cx="238.0" cy="85.3" r=".4" fill="#a9c6ff" opacity="0.10"/>
<circle cx="174.3" cy="57.6" r="34" fill="url(#pg2)"/>
<!-- backboard -->
<path d="M229,102 V36 L274,0 H310 V102 Z" fill="url(#pg4)" opacity=".9"/>
<path d="M221,102 V28 L257.4,0 H274 L229,36 V102 Z" fill="#eef3fb"/>
<path d="M221,102 V28 L257.4,0 H262 L224.6,29.6 V102 Z" fill="#9fb2cf"/>
<path d="M231,33 L310,75" fill="none" stroke="#7d90b2" stroke-width="1.8"/>
<path d="M262.8,102 V72.4 L302.3,47.4 V102" fill="none" stroke="#edf2fa" stroke-width="4.6"/>
<!-- ball -->
<circle cx="174.3" cy="57.6" r="24.2" fill="#a8c8ff" opacity=".5"/>
<circle cx="174.3" cy="57.6" r="23.5" fill="url(#pg3)"/>
<g fill="none" stroke="#2a0e08" stroke-width=".8" transform="translate(174.3 57.6)">
<path d="M-11,-21 Q3,-6 7,8 T10,21.3"/>
<path d="M11.3,-20.6 Q15,-6 6,8.5 T-2.5,23"/>
<path d="M-22.7,-5.3 Q-12,2 -4.7,3.2 T20.8,-2.1 "/>
<path d="M-19.5,12.6 Q-6,15 -0.4,13.8 T21.9,6.2"/>
</g>
<!-- ribbon -->
<path d="M99.8,25.8 Q105,36 101.5,43.5 Q97,50 92.5,54 Q90,58 93,61 Q96,65 90,70 Q85,74 87,79" fill="none" stroke="#c99a42" stroke-width="2.4" stroke-linecap="round"/>
<path d="M86,74.5 l7,-3 l1.4,4.5 l-7,3 z" fill="#d9ac50"/>
<rect x="41.5" y="6.7" width="5" height="3.4" fill="#dfa23a" transform="rotate(20 44.0 8.4)"/><rect x="30.8" y="38.2" width="3.4" height="5.5" fill="#dfa23a" transform="rotate(15 32.5 41.0)"/><rect x="54.8" y="36.4" width="5" height="3.6" fill="#dfa23a" transform="rotate(10 57.3 38.2)"/><rect x="70.3" y="31.6" width="3" height="3.4" fill="#dfa23a" transform="rotate(30 71.8 33.3)"/><rect x="15.2" y="65.8" width="3.6" height="2" fill="#dfa23a" transform="rotate(5 17.0 66.8)"/><rect x="177.9" y="5.1" width="3" height="4.6" fill="#dfa23a" transform="rotate(-5 179.4 7.4)"/><rect x="115.1" y="85.7" width="4.6" height="3.4" fill="#dfa23a" transform="rotate(20 117.4 87.4)"/><rect x="126.7" y="80.5" width="2.6" height="2.4" fill="#dfa23a" transform="rotate(30 128.0 81.7)"/><rect x="282.8" y="11.5" width="5.4" height="3.6" fill="#dfa23a" transform="rotate(15 285.5 13.3)"/><rect x="272.1" y="45.1" width="5.4" height="3.8" fill="#dfa23a" transform="rotate(20 274.8 47.0)"/><rect x="217.0" y="87.7" width="2.8" height="3.8" fill="#dfa23a" transform="rotate(10 218.4 89.6)"/><rect x="230.0" y="86.2" width="2.6" height="2.2" fill="#dfa23a" transform="rotate(10 231.3 87.3)"/><rect x="307.5" y="24.5" width="3" height="5" fill="#dfa23a" transform="rotate(10 309.0 27.0)"/><ellipse cx="48.8" cy="60.9" rx="2.25" ry="4.5" fill="#cf9a34" opacity=".62" filter="url(#pbl)" transform="rotate(25 48.8 60.9)"/><ellipse cx="183.0" cy="27.0" rx="2.0" ry="4.75" fill="#cf9a34" opacity=".62" filter="url(#pbl)" transform="rotate(30 183.0 27.0)"/><ellipse cx="201.7" cy="20.0" rx="3.25" ry="5.0" fill="#cf9a34" opacity=".62" filter="url(#pbl)" transform="rotate(35 201.7 20.0)"/><ellipse cx="233.0" cy="14.5" rx="2.5" ry="5.0" fill="#cf9a34" opacity=".62" filter="url(#pbl)" transform="rotate(30 233.0 14.5)"/><ellipse cx="218.0" cy="57.0" rx="2.75" ry="5.0" fill="#cf9a34" opacity=".62" filter="url(#pbl)" transform="rotate(25 218.0 57.0)"/>
<text x="10.5" y="127.6" font-family="'Liberation Sans','Noto Sans CJK SC',sans-serif" font-weight="900" font-size="34" fill="#fff2c6" stroke="#0a0a0a" stroke-width="5" paint-order="stroke" stroke-linejoin="round" letter-spacing="-1">新篮球玩法</text>
</svg></div>
</div>
</body>
</html>
